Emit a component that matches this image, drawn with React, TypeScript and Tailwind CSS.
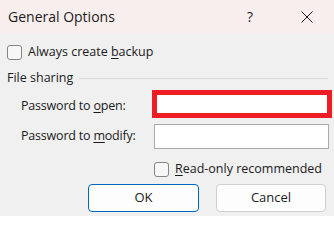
import React from "react";

const U = ({ children }: { children: React.ReactNode }) => (
  <span className="underline underline-offset-2 decoration-1">{children}</span>
);

const Box = () => (
  <div className="w-[15px] h-[15px] rounded-[3px] border border-[#858585] bg-[#f7f7f7] shrink-0" />
);

export default function App() {
  return (
    <div
      className="w-[334px] h-[216px] bg-[#f0f0f0] overflow-hidden text-[#1b1b1b]"
      style={{ fontFamily: '"Open Sans", "Noto Sans", sans-serif' }}
    >
      {/* title bar */}
      <div className="h-[33px] bg-[#f9eeee] flex items-center pl-[8px]">
        <span className="text-[14px] leading-none">General Options</span>
        <span className="ml-auto text-[14px] leading-none mr-[48px]">?</span>
        <svg width="12" height="12" viewBox="0 0 12 12" className="mr-[21px]">
          <path d="M0.5 0.5 L11.5 11.5 M11.5 0.5 L0.5 11.5" stroke="#1b1b1b" strokeWidth="1" />
        </svg>
      </div>

      <div className="text-[12.5px] leading-none">
        <div className="flex items-center gap-[6px] pl-[7px] mt-[12px]">
          <Box />
          <span>Always create <U>b</U>ackup</span>
        </div>

        <div className="flex items-center pl-[7px] pr-[6px] mt-[12px]">
          <span>File sharing</span>
          <div className="flex-1 h-px bg-[#d9d9d9] ml-[6px]" />
        </div>

        <div className="grid grid-cols-[152px_1fr] items-center mt-[5px] pr-[2px]">
          <span className="pl-[21px] pt-[6px] tracking-[-0.2px]">Password to <U>o</U>pen:</span>
          <div className="h-[28px] border-[5px] border-[#ee1c25] bg-white" />
          <span className="pl-[21px] mt-[6px] tracking-[-0.2px]">Password to <U>m</U>odify:</span>
          <div className="ml-[2px] mr-[3px] mt-[6px] h-[25px] border-[1.5px] border-[#a9a9a9] bg-white" />
        </div>

        <div className="flex items-center gap-[6px] pl-[154px] mt-[13px]">
          <Box />
          <span><U>R</U>ead-only recommended</span>
        </div>

        <div className="flex gap-[17px] pl-[88px] mt-[7px]">
          <button className="w-[111px] h-[28px] rounded-[4px] border-[1.5px] border-[#0067c0] bg-[#fdfdfd] text-[13px]">
            OK
          </button>
          <button className="w-[110px] h-[28px] rounded-[4px] border border-[#d0d0d0] bg-[#fdfdfd] text-[13px]">
            Cancel
          </button>
        </div>
      </div>
    </div>
  );
}
